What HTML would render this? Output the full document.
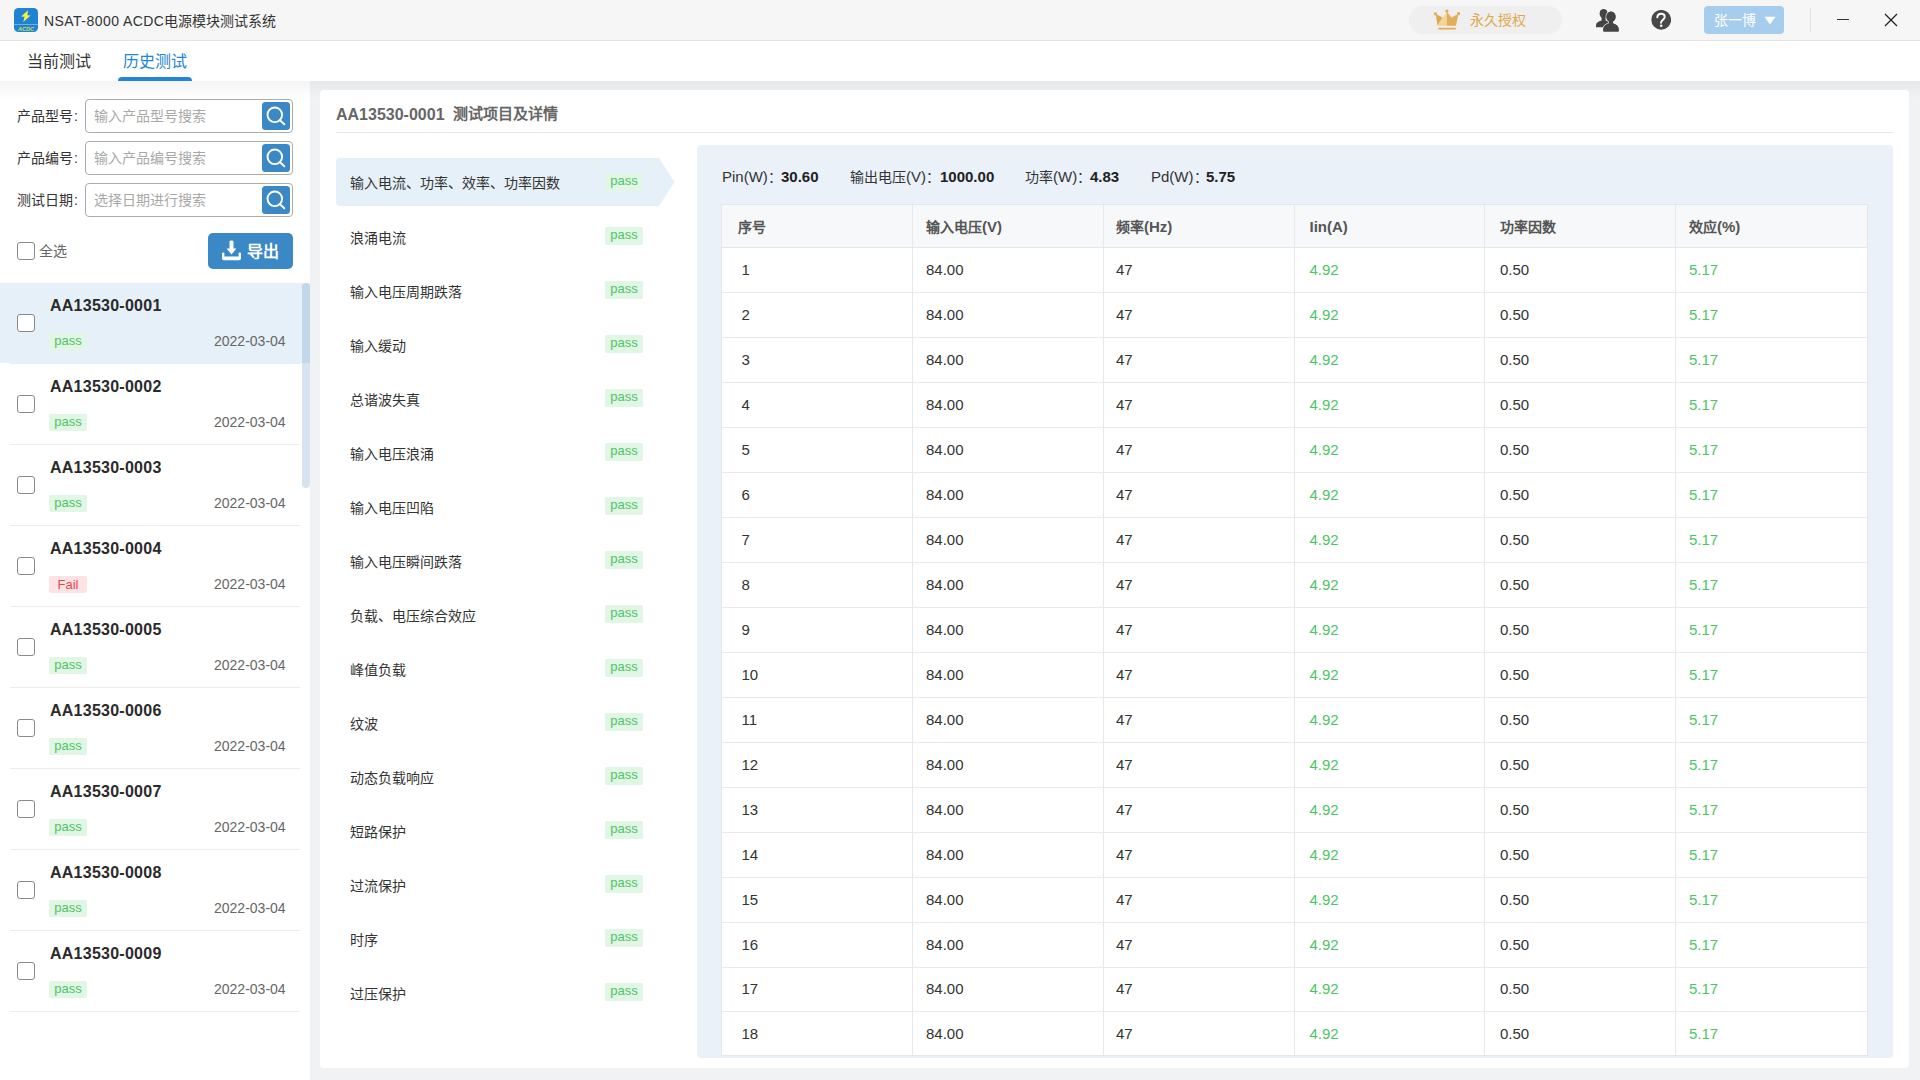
<!DOCTYPE html>
<html lang="zh-CN"><head><meta charset="utf-8"><style>*{box-sizing:border-box;margin:0;padding:0}
html,body{width:1920px;height:1080px;overflow:hidden;background:#f1f2f4;font-family:"Liberation Sans",sans-serif;color:#333}
.a{position:absolute}
.t{position:absolute;white-space:nowrap;line-height:1}
</style></head><body>
<div class="a" style="left:0;top:0;width:1920px;height:40px;background:#f6f6f6"></div>
<div class="a" style="left:0;top:40px;width:1920px;height:1px;background:#e2e2e2"></div>
<svg class="a" style="left:14px;top:8px" width="24" height="24" viewBox="0 0 24 24">
<rect x="0" y="0" width="24" height="24" rx="4.5" fill="#1f82d3"/>
<rect x="0" y="16" width="24" height="1" fill="#6db0e4"/>
<path d="M14 2.2 L7.2 8.6 L10.6 8.8 L9.2 13.9 L16.7 7.5 L13.3 7.2 Z" fill="#f8f43a"/>
<text x="12" y="22.6" font-size="5.6" font-family="Liberation Sans" font-weight="bold" fill="#c9e04a" text-anchor="middle" font-style="italic">ACDC</text>
</svg>
<div class="t" style="left:44px;top:14px;font-size:14px;color:#333"><span style="letter-spacing:0.45px">NSAT-8000 ACDC</span>电源模块测试系统</div>
<div class="a" style="left:1409px;top:6px;width:153px;height:28px;background:#efefef;border-radius:14px"></div>
<svg class="a" style="left:1433px;top:9px" width="28" height="22" viewBox="0 0 28 22">
<path d="M2.6 5 L9.6 8.6 L4.6 16.8 Z" fill="#e0a94f"/>
<path d="M14 3 L4.4 16.8 L14 16.8 Z" fill="#f2d598"/>
<path d="M13.9 3 L18.6 8.6 L25.4 5 L23 16.8 L13.9 16.8 Z" fill="#e3ae5c"/>
<circle cx="2.4" cy="4.8" r="1.6" fill="#e3ab55"/><circle cx="13.9" cy="2.1" r="1.6" fill="#e3ab55"/><circle cx="25.6" cy="4.7" r="1.6" fill="#e3ab55"/>
<rect x="5" y="18.7" width="18" height="1.7" rx="0.8" fill="#e3ab55"/>
</svg>
<div class="t" style="left:1470px;top:13px;font-size:14px;color:#e2a74a">永久授权</div>
<svg class="a" style="left:1594px;top:8px" width="26" height="24" viewBox="0 0 26 24">
<g fill="#444">
<ellipse cx="9.6" cy="5.6" rx="4" ry="4.7"/>
<rect x="7.6" y="9" width="4" height="4"/>
<path d="M2 19.2 L2 17.2 C2 15 4.5 13.6 7.5 12.6 L11.8 12.6 C13 13 14 13.6 14.6 14.2 L14.6 19.2 Z"/>
</g>
<g fill="#444" stroke="#f6f6f6" stroke-width="1.6" paint-order="stroke">
<ellipse cx="17" cy="8.8" rx="4.6" ry="5.3"/>
<path d="M9.4 23.4 L9.4 20.8 C9.4 17.8 12.4 16.2 15 15.4 L19 15.4 C21.6 16.2 24.6 17.8 24.6 20.8 L24.6 23.4 Z"/>
</g>
<g fill="#444"><ellipse cx="17" cy="8.8" rx="4.6" ry="5.3"/><rect x="15" y="12" width="4" height="4.4"/>
<path d="M9.4 23.4 L9.4 20.8 C9.4 17.8 12.4 16.2 15 15.4 L19 15.4 C21.6 16.2 24.6 17.8 24.6 20.8 L24.6 23.4 Z"/></g>
</svg>
<svg class="a" style="left:1651px;top:10px" width="20" height="20" viewBox="0 0 20 20">
<circle cx="10.2" cy="9.8" r="9.9" fill="#484848"/>
<path d="M6.3 7.3 C6.5 5 8.2 3.8 10.2 3.8 C12.4 3.8 13.7 5.2 13.7 7 C13.7 9.3 10.1 10.3 10 12.8" stroke="#fff" stroke-width="1.9" fill="none" stroke-linecap="round"/>
<circle cx="10.2" cy="15.7" r="1.3" fill="#fff"/>
</svg>
<div class="a" style="left:1704px;top:6px;width:80px;height:28px;background:#a7cdee;border-radius:4px"></div>
<div class="t" style="left:1714px;top:13px;font-size:14px;color:#fff">张一博</div>
<svg class="a" style="left:1764px;top:16px" width="12" height="9" viewBox="0 0 12 9"><path d="M0.5 0.8 L11.5 0.8 L6 8.5 Z" fill="#fff"/></svg>
<div class="a" style="left:1810px;top:8px;width:1px;height:24px;background:#e4e4e4"></div>
<div class="a" style="left:1837px;top:18.5px;width:12px;height:1.4px;background:#333"></div>
<svg class="a" style="left:1884px;top:13px" width="14" height="14" viewBox="0 0 14 14"><path d="M1 1 L13 13 M13 1 L1 13" stroke="#222" stroke-width="1.3"/></svg>
<div class="a" style="left:0;top:41px;width:1920px;height:40px;background:#fff"></div>
<div class="t" style="left:27px;top:54px;font-size:16px;color:#333">当前测试</div>
<div class="t" style="left:123px;top:54px;font-size:16px;color:#2386d3">历史测试</div>
<div class="a" style="left:118px;top:77px;width:74px;height:4px;background:#2386d3;border-radius:4px 4px 0 0"></div>
<div class="a" style="left:0;top:81px;width:310px;height:999px;background:#fff"></div>
<div class="t" style="left:17px;top:109px;font-size:14px;color:#333">产品型号<span style="margin-left:1px">:</span></div>
<div class="a" style="left:85px;top:99px;width:208px;height:34px;border:1px solid #acacac;border-radius:4px;background:#fff"></div>
<div class="t" style="left:94px;top:109px;font-size:14px;color:#a8a8a8">输入产品型号搜索</div>
<svg class="a" style="left:262px;top:102px" width="28" height="28" viewBox="0 0 28 28"><rect width="28" height="28" rx="3.5" fill="#3a88c5"/><circle cx="12.8" cy="12.8" r="7.3" stroke="#fff" stroke-width="1.9" fill="none"/><path d="M17.9 18.1 L22.3 22.3" stroke="#fff" stroke-width="2" stroke-linecap="round"/></svg>
<div class="t" style="left:17px;top:151px;font-size:14px;color:#333">产品编号<span style="margin-left:1px">:</span></div>
<div class="a" style="left:85px;top:141px;width:208px;height:34px;border:1px solid #acacac;border-radius:4px;background:#fff"></div>
<div class="t" style="left:94px;top:151px;font-size:14px;color:#a8a8a8">输入产品编号搜索</div>
<svg class="a" style="left:262px;top:144px" width="28" height="28" viewBox="0 0 28 28"><rect width="28" height="28" rx="3.5" fill="#3a88c5"/><circle cx="12.8" cy="12.8" r="7.3" stroke="#fff" stroke-width="1.9" fill="none"/><path d="M17.9 18.1 L22.3 22.3" stroke="#fff" stroke-width="2" stroke-linecap="round"/></svg>
<div class="t" style="left:17px;top:193px;font-size:14px;color:#333">测试日期<span style="margin-left:1px">:</span></div>
<div class="a" style="left:85px;top:183px;width:208px;height:34px;border:1px solid #acacac;border-radius:4px;background:#fff"></div>
<div class="t" style="left:94px;top:193px;font-size:14px;color:#a8a8a8">选择日期进行搜索</div>
<svg class="a" style="left:262px;top:186px" width="28" height="28" viewBox="0 0 28 28"><rect width="28" height="28" rx="3.5" fill="#3a88c5"/><circle cx="12.8" cy="12.8" r="7.3" stroke="#fff" stroke-width="1.9" fill="none"/><path d="M17.9 18.1 L22.3 22.3" stroke="#fff" stroke-width="2" stroke-linecap="round"/></svg>
<div class="a" style="left:17px;top:242px;width:18px;height:18px;border:1.5px solid #8a8a8a;border-radius:3px;background:#fff"></div>
<div class="t" style="left:39px;top:244px;font-size:14px;color:#666">全选</div>
<div class="a" style="left:208px;top:233px;width:85px;height:36px;background:#3a88c5;border-radius:5px"></div>
<svg class="a" style="left:221px;top:240px" width="21" height="21" viewBox="0 0 21 21">
<path d="M8.5 1.6 Q8.5 0.6 10.5 0.6 Q12.5 0.6 12.5 1.6 L12.5 8.6 L15.4 8.6 L10.5 14.5 L5.6 8.6 L8.5 8.6 Z" fill="#fff"/>
<path d="M1 13.5 L1 18.4 Q1 20.2 2.8 20.2 L18.2 20.2 Q20 20.2 20 18.4 L20 13.5 Q20 12.5 18.8 12.5 Q17.6 12.5 17.6 13.5 L17.6 16.6 L3.4 16.6 L3.4 13.5 Q3.4 12.5 2.2 12.5 Q1 12.5 1 13.5 Z" fill="#fff"/>
</svg>
<div class="t" style="left:247px;top:244px;font-size:16px;font-weight:bold;color:#fff">导出</div>
<div class="a" style="left:0;top:283px;width:310px;height:80px;background:#e6f0f8"></div>
<div class="a" style="left:10px;top:363px;width:290px;height:1px;background:#ececec"></div>
<div class="a" style="left:17px;top:314px;width:18px;height:18px;border:1.5px solid #8a8a8a;border-radius:3px;background:#fff"></div>
<div class="t" style="left:50px;top:298px;font-size:16px;font-weight:bold;color:#2a2a2a;letter-spacing:0.25px">AA13530-0001</div>
<div class="t" style="left:49px;top:333px;width:38px;height:17px;background:#e2f6e5;color:#4cc565;font-size:13px;line-height:15.5px;text-align:center;border-radius:2px">pass</div>
<div class="t" style="left:214px;top:334px;font-size:14px;color:#666">2022-03-04</div>
<div class="a" style="left:10px;top:444px;width:290px;height:1px;background:#ececec"></div>
<div class="a" style="left:17px;top:395px;width:18px;height:18px;border:1.5px solid #8a8a8a;border-radius:3px;background:#fff"></div>
<div class="t" style="left:50px;top:379px;font-size:16px;font-weight:bold;color:#2a2a2a;letter-spacing:0.25px">AA13530-0002</div>
<div class="t" style="left:49px;top:414px;width:38px;height:17px;background:#e2f6e5;color:#4cc565;font-size:13px;line-height:15.5px;text-align:center;border-radius:2px">pass</div>
<div class="t" style="left:214px;top:415px;font-size:14px;color:#666">2022-03-04</div>
<div class="a" style="left:10px;top:525px;width:290px;height:1px;background:#ececec"></div>
<div class="a" style="left:17px;top:476px;width:18px;height:18px;border:1.5px solid #8a8a8a;border-radius:3px;background:#fff"></div>
<div class="t" style="left:50px;top:460px;font-size:16px;font-weight:bold;color:#2a2a2a;letter-spacing:0.25px">AA13530-0003</div>
<div class="t" style="left:49px;top:495px;width:38px;height:17px;background:#e2f6e5;color:#4cc565;font-size:13px;line-height:15.5px;text-align:center;border-radius:2px">pass</div>
<div class="t" style="left:214px;top:496px;font-size:14px;color:#666">2022-03-04</div>
<div class="a" style="left:10px;top:606px;width:290px;height:1px;background:#ececec"></div>
<div class="a" style="left:17px;top:557px;width:18px;height:18px;border:1.5px solid #8a8a8a;border-radius:3px;background:#fff"></div>
<div class="t" style="left:50px;top:541px;font-size:16px;font-weight:bold;color:#2a2a2a;letter-spacing:0.25px">AA13530-0004</div>
<div class="t" style="left:49px;top:576px;width:38px;height:17px;background:#fde3e3;color:#e5474d;font-size:13px;line-height:17px;text-align:center;border-radius:2px">Fail</div>
<div class="t" style="left:214px;top:577px;font-size:14px;color:#666">2022-03-04</div>
<div class="a" style="left:10px;top:687px;width:290px;height:1px;background:#ececec"></div>
<div class="a" style="left:17px;top:638px;width:18px;height:18px;border:1.5px solid #8a8a8a;border-radius:3px;background:#fff"></div>
<div class="t" style="left:50px;top:622px;font-size:16px;font-weight:bold;color:#2a2a2a;letter-spacing:0.25px">AA13530-0005</div>
<div class="t" style="left:49px;top:657px;width:38px;height:17px;background:#e2f6e5;color:#4cc565;font-size:13px;line-height:15.5px;text-align:center;border-radius:2px">pass</div>
<div class="t" style="left:214px;top:658px;font-size:14px;color:#666">2022-03-04</div>
<div class="a" style="left:10px;top:768px;width:290px;height:1px;background:#ececec"></div>
<div class="a" style="left:17px;top:719px;width:18px;height:18px;border:1.5px solid #8a8a8a;border-radius:3px;background:#fff"></div>
<div class="t" style="left:50px;top:703px;font-size:16px;font-weight:bold;color:#2a2a2a;letter-spacing:0.25px">AA13530-0006</div>
<div class="t" style="left:49px;top:738px;width:38px;height:17px;background:#e2f6e5;color:#4cc565;font-size:13px;line-height:15.5px;text-align:center;border-radius:2px">pass</div>
<div class="t" style="left:214px;top:739px;font-size:14px;color:#666">2022-03-04</div>
<div class="a" style="left:10px;top:849px;width:290px;height:1px;background:#ececec"></div>
<div class="a" style="left:17px;top:800px;width:18px;height:18px;border:1.5px solid #8a8a8a;border-radius:3px;background:#fff"></div>
<div class="t" style="left:50px;top:784px;font-size:16px;font-weight:bold;color:#2a2a2a;letter-spacing:0.25px">AA13530-0007</div>
<div class="t" style="left:49px;top:819px;width:38px;height:17px;background:#e2f6e5;color:#4cc565;font-size:13px;line-height:15.5px;text-align:center;border-radius:2px">pass</div>
<div class="t" style="left:214px;top:820px;font-size:14px;color:#666">2022-03-04</div>
<div class="a" style="left:10px;top:930px;width:290px;height:1px;background:#ececec"></div>
<div class="a" style="left:17px;top:881px;width:18px;height:18px;border:1.5px solid #8a8a8a;border-radius:3px;background:#fff"></div>
<div class="t" style="left:50px;top:865px;font-size:16px;font-weight:bold;color:#2a2a2a;letter-spacing:0.25px">AA13530-0008</div>
<div class="t" style="left:49px;top:900px;width:38px;height:17px;background:#e2f6e5;color:#4cc565;font-size:13px;line-height:15.5px;text-align:center;border-radius:2px">pass</div>
<div class="t" style="left:214px;top:901px;font-size:14px;color:#666">2022-03-04</div>
<div class="a" style="left:10px;top:1011px;width:290px;height:1px;background:#ececec"></div>
<div class="a" style="left:17px;top:962px;width:18px;height:18px;border:1.5px solid #8a8a8a;border-radius:3px;background:#fff"></div>
<div class="t" style="left:50px;top:946px;font-size:16px;font-weight:bold;color:#2a2a2a;letter-spacing:0.25px">AA13530-0009</div>
<div class="t" style="left:49px;top:981px;width:38px;height:17px;background:#e2f6e5;color:#4cc565;font-size:13px;line-height:15.5px;text-align:center;border-radius:2px">pass</div>
<div class="t" style="left:214px;top:982px;font-size:14px;color:#666">2022-03-04</div>
<div class="a" style="left:302px;top:283px;width:8px;height:205px;background:rgba(30,105,175,0.18);border-radius:4px"></div>
<div class="a" style="left:0;top:81px;width:1920px;height:18px;background:linear-gradient(rgba(0,0,0,0.045),rgba(0,0,0,0))"></div>
<div class="a" style="left:320px;top:90px;width:1589px;height:978px;background:#fff;border-radius:4px"></div>
<div class="t" style="left:336px;top:106.5px;font-size:16px;font-weight:bold;color:#666">AA13530-0001 <span style="font-size:15px;margin-left:4px;position:relative;top:-1px">测试项目及详情</span></div>
<div class="a" style="left:336px;top:132px;width:1557px;height:1px;background:#e6e6e6"></div>
<svg class="a" style="left:336px;top:158px" width="339" height="48" viewBox="0 0 339 48"><path d="M4 0 L323 0 L338.5 24 L323 48 L4 48 Q0 48 0 44 L0 4 Q0 0 4 0 Z" fill="#e6f0f8"/></svg>
<div class="t" style="left:350px;top:176px;font-size:14px;color:#333">输入电流、功率、效率、功率因数</div>
<div class="t" style="left:605px;top:173px;width:38px;height:18px;background:#e2f6e5;color:#4cc565;font-size:13px;line-height:15.5px;text-align:center;border-radius:2px">pass</div>
<div class="t" style="left:350px;top:231px;font-size:14px;color:#333">浪涌电流</div>
<div class="t" style="left:605px;top:227px;width:38px;height:18px;background:#e2f6e5;color:#4cc565;font-size:13px;line-height:15.5px;text-align:center;border-radius:2px">pass</div>
<div class="t" style="left:350px;top:285px;font-size:14px;color:#333">输入电压周期跌落</div>
<div class="t" style="left:605px;top:281px;width:38px;height:18px;background:#e2f6e5;color:#4cc565;font-size:13px;line-height:15.5px;text-align:center;border-radius:2px">pass</div>
<div class="t" style="left:350px;top:339px;font-size:14px;color:#333">输入缓动</div>
<div class="t" style="left:605px;top:335px;width:38px;height:18px;background:#e2f6e5;color:#4cc565;font-size:13px;line-height:15.5px;text-align:center;border-radius:2px">pass</div>
<div class="t" style="left:350px;top:393px;font-size:14px;color:#333">总谐波失真</div>
<div class="t" style="left:605px;top:389px;width:38px;height:18px;background:#e2f6e5;color:#4cc565;font-size:13px;line-height:15.5px;text-align:center;border-radius:2px">pass</div>
<div class="t" style="left:350px;top:447px;font-size:14px;color:#333">输入电压浪涌</div>
<div class="t" style="left:605px;top:443px;width:38px;height:18px;background:#e2f6e5;color:#4cc565;font-size:13px;line-height:15.5px;text-align:center;border-radius:2px">pass</div>
<div class="t" style="left:350px;top:501px;font-size:14px;color:#333">输入电压凹陷</div>
<div class="t" style="left:605px;top:497px;width:38px;height:18px;background:#e2f6e5;color:#4cc565;font-size:13px;line-height:15.5px;text-align:center;border-radius:2px">pass</div>
<div class="t" style="left:350px;top:555px;font-size:14px;color:#333">输入电压瞬间跌落</div>
<div class="t" style="left:605px;top:551px;width:38px;height:18px;background:#e2f6e5;color:#4cc565;font-size:13px;line-height:15.5px;text-align:center;border-radius:2px">pass</div>
<div class="t" style="left:350px;top:609px;font-size:14px;color:#333">负载、电压综合效应</div>
<div class="t" style="left:605px;top:605px;width:38px;height:18px;background:#e2f6e5;color:#4cc565;font-size:13px;line-height:15.5px;text-align:center;border-radius:2px">pass</div>
<div class="t" style="left:350px;top:663px;font-size:14px;color:#333">峰值负载</div>
<div class="t" style="left:605px;top:659px;width:38px;height:18px;background:#e2f6e5;color:#4cc565;font-size:13px;line-height:15.5px;text-align:center;border-radius:2px">pass</div>
<div class="t" style="left:350px;top:717px;font-size:14px;color:#333">纹波</div>
<div class="t" style="left:605px;top:713px;width:38px;height:18px;background:#e2f6e5;color:#4cc565;font-size:13px;line-height:15.5px;text-align:center;border-radius:2px">pass</div>
<div class="t" style="left:350px;top:771px;font-size:14px;color:#333">动态负载响应</div>
<div class="t" style="left:605px;top:767px;width:38px;height:18px;background:#e2f6e5;color:#4cc565;font-size:13px;line-height:15.5px;text-align:center;border-radius:2px">pass</div>
<div class="t" style="left:350px;top:825px;font-size:14px;color:#333">短路保护</div>
<div class="t" style="left:605px;top:821px;width:38px;height:18px;background:#e2f6e5;color:#4cc565;font-size:13px;line-height:15.5px;text-align:center;border-radius:2px">pass</div>
<div class="t" style="left:350px;top:879px;font-size:14px;color:#333">过流保护</div>
<div class="t" style="left:605px;top:875px;width:38px;height:18px;background:#e2f6e5;color:#4cc565;font-size:13px;line-height:15.5px;text-align:center;border-radius:2px">pass</div>
<div class="t" style="left:350px;top:933px;font-size:14px;color:#333">时序</div>
<div class="t" style="left:605px;top:929px;width:38px;height:18px;background:#e2f6e5;color:#4cc565;font-size:13px;line-height:15.5px;text-align:center;border-radius:2px">pass</div>
<div class="t" style="left:350px;top:987px;font-size:14px;color:#333">过压保护</div>
<div class="t" style="left:605px;top:983px;width:38px;height:18px;background:#e2f6e5;color:#4cc565;font-size:13px;line-height:15.5px;text-align:center;border-radius:2px">pass</div>
<div class="a" style="left:697px;top:145px;width:1196px;height:913px;background:#eaf1f9;border-radius:4px"></div>
<div class="t" style="left:722px;top:169px;font-size:15px;color:#333">Pin(W)<span style="font-size:14px">：</span></div>
<div class="t" style="left:781px;top:169px;font-size:15px;font-weight:bold;color:#222">30.60</div>
<div class="t" style="left:850px;top:169px;font-size:15px;color:#333"><span style="font-size:14px">输出电压</span>(V)<span style="font-size:14px">：</span></div>
<div class="t" style="left:940px;top:169px;font-size:15px;font-weight:bold;color:#222">1000.00</div>
<div class="t" style="left:1025px;top:169px;font-size:15px;color:#333"><span style="font-size:14px">功率</span>(W)<span style="font-size:14px">：</span></div>
<div class="t" style="left:1090px;top:169px;font-size:15px;font-weight:bold;color:#222">4.83</div>
<div class="t" style="left:1151px;top:169px;font-size:15px;color:#333">Pd(W)<span style="font-size:14px">：</span></div>
<div class="t" style="left:1206px;top:169px;font-size:15px;font-weight:bold;color:#222">5.75</div>
<div class="a" style="left:721px;top:204px;width:1147px;height:852px;background:#fff;border:1px solid #e3e6ea"></div>
<div class="a" style="left:722px;top:205px;width:1145px;height:42px;background:#f7f8fa"></div>
<div class="a" style="left:912px;top:205px;width:1px;height:850px;background:#e6e8eb"></div>
<div class="a" style="left:1103px;top:205px;width:1px;height:850px;background:#e6e8eb"></div>
<div class="a" style="left:1294px;top:205px;width:1px;height:850px;background:#e6e8eb"></div>
<div class="a" style="left:1484px;top:205px;width:1px;height:850px;background:#e6e8eb"></div>
<div class="a" style="left:1675px;top:205px;width:1px;height:850px;background:#e6e8eb"></div>
<div class="t" style="left:738px;top:218.5px;font-size:15px;font-weight:bold;color:#555"><span style="font-size:14px">序号</span></div>
<div class="t" style="left:926px;top:218.5px;font-size:15px;font-weight:bold;color:#555"><span style="font-size:14px">输入电压</span>(V)</div>
<div class="t" style="left:1116px;top:218.5px;font-size:15px;font-weight:bold;color:#555"><span style="font-size:14px">频率</span>(Hz)</div>
<div class="t" style="left:1309.5px;top:218.5px;font-size:15px;font-weight:bold;color:#555">Iin(A)</div>
<div class="t" style="left:1500px;top:218.5px;font-size:15px;font-weight:bold;color:#555"><span style="font-size:14px">功率因数</span></div>
<div class="t" style="left:1689px;top:218.5px;font-size:15px;font-weight:bold;color:#555"><span style="font-size:14px">效应</span>(%)</div>
<div class="a" style="left:722px;top:247px;width:1145px;height:1px;background:#e3e6ea"></div>
<div class="a" style="left:722px;top:292px;width:1145px;height:1px;background:#e8eaed"></div>
<div class="t" style="left:741.5px;top:261.5px;font-size:15px;color:#333">1</div>
<div class="t" style="left:926px;top:261.5px;font-size:15px;color:#333">84.00</div>
<div class="t" style="left:1116px;top:261.5px;font-size:15px;color:#333">47</div>
<div class="t" style="left:1309.5px;top:261.5px;font-size:15px;color:#4cc565">4.92</div>
<div class="t" style="left:1500px;top:261.5px;font-size:15px;color:#333">0.50</div>
<div class="t" style="left:1689px;top:261.5px;font-size:15px;color:#4cc565">5.17</div>
<div class="a" style="left:722px;top:337px;width:1145px;height:1px;background:#e8eaed"></div>
<div class="t" style="left:741.5px;top:306.5px;font-size:15px;color:#333">2</div>
<div class="t" style="left:926px;top:306.5px;font-size:15px;color:#333">84.00</div>
<div class="t" style="left:1116px;top:306.5px;font-size:15px;color:#333">47</div>
<div class="t" style="left:1309.5px;top:306.5px;font-size:15px;color:#4cc565">4.92</div>
<div class="t" style="left:1500px;top:306.5px;font-size:15px;color:#333">0.50</div>
<div class="t" style="left:1689px;top:306.5px;font-size:15px;color:#4cc565">5.17</div>
<div class="a" style="left:722px;top:382px;width:1145px;height:1px;background:#e8eaed"></div>
<div class="t" style="left:741.5px;top:351.5px;font-size:15px;color:#333">3</div>
<div class="t" style="left:926px;top:351.5px;font-size:15px;color:#333">84.00</div>
<div class="t" style="left:1116px;top:351.5px;font-size:15px;color:#333">47</div>
<div class="t" style="left:1309.5px;top:351.5px;font-size:15px;color:#4cc565">4.92</div>
<div class="t" style="left:1500px;top:351.5px;font-size:15px;color:#333">0.50</div>
<div class="t" style="left:1689px;top:351.5px;font-size:15px;color:#4cc565">5.17</div>
<div class="a" style="left:722px;top:427px;width:1145px;height:1px;background:#e8eaed"></div>
<div class="t" style="left:741.5px;top:396.5px;font-size:15px;color:#333">4</div>
<div class="t" style="left:926px;top:396.5px;font-size:15px;color:#333">84.00</div>
<div class="t" style="left:1116px;top:396.5px;font-size:15px;color:#333">47</div>
<div class="t" style="left:1309.5px;top:396.5px;font-size:15px;color:#4cc565">4.92</div>
<div class="t" style="left:1500px;top:396.5px;font-size:15px;color:#333">0.50</div>
<div class="t" style="left:1689px;top:396.5px;font-size:15px;color:#4cc565">5.17</div>
<div class="a" style="left:722px;top:472px;width:1145px;height:1px;background:#e8eaed"></div>
<div class="t" style="left:741.5px;top:441.5px;font-size:15px;color:#333">5</div>
<div class="t" style="left:926px;top:441.5px;font-size:15px;color:#333">84.00</div>
<div class="t" style="left:1116px;top:441.5px;font-size:15px;color:#333">47</div>
<div class="t" style="left:1309.5px;top:441.5px;font-size:15px;color:#4cc565">4.92</div>
<div class="t" style="left:1500px;top:441.5px;font-size:15px;color:#333">0.50</div>
<div class="t" style="left:1689px;top:441.5px;font-size:15px;color:#4cc565">5.17</div>
<div class="a" style="left:722px;top:517px;width:1145px;height:1px;background:#e8eaed"></div>
<div class="t" style="left:741.5px;top:486.5px;font-size:15px;color:#333">6</div>
<div class="t" style="left:926px;top:486.5px;font-size:15px;color:#333">84.00</div>
<div class="t" style="left:1116px;top:486.5px;font-size:15px;color:#333">47</div>
<div class="t" style="left:1309.5px;top:486.5px;font-size:15px;color:#4cc565">4.92</div>
<div class="t" style="left:1500px;top:486.5px;font-size:15px;color:#333">0.50</div>
<div class="t" style="left:1689px;top:486.5px;font-size:15px;color:#4cc565">5.17</div>
<div class="a" style="left:722px;top:562px;width:1145px;height:1px;background:#e8eaed"></div>
<div class="t" style="left:741.5px;top:531.5px;font-size:15px;color:#333">7</div>
<div class="t" style="left:926px;top:531.5px;font-size:15px;color:#333">84.00</div>
<div class="t" style="left:1116px;top:531.5px;font-size:15px;color:#333">47</div>
<div class="t" style="left:1309.5px;top:531.5px;font-size:15px;color:#4cc565">4.92</div>
<div class="t" style="left:1500px;top:531.5px;font-size:15px;color:#333">0.50</div>
<div class="t" style="left:1689px;top:531.5px;font-size:15px;color:#4cc565">5.17</div>
<div class="a" style="left:722px;top:607px;width:1145px;height:1px;background:#e8eaed"></div>
<div class="t" style="left:741.5px;top:576.5px;font-size:15px;color:#333">8</div>
<div class="t" style="left:926px;top:576.5px;font-size:15px;color:#333">84.00</div>
<div class="t" style="left:1116px;top:576.5px;font-size:15px;color:#333">47</div>
<div class="t" style="left:1309.5px;top:576.5px;font-size:15px;color:#4cc565">4.92</div>
<div class="t" style="left:1500px;top:576.5px;font-size:15px;color:#333">0.50</div>
<div class="t" style="left:1689px;top:576.5px;font-size:15px;color:#4cc565">5.17</div>
<div class="a" style="left:722px;top:652px;width:1145px;height:1px;background:#e8eaed"></div>
<div class="t" style="left:741.5px;top:621.5px;font-size:15px;color:#333">9</div>
<div class="t" style="left:926px;top:621.5px;font-size:15px;color:#333">84.00</div>
<div class="t" style="left:1116px;top:621.5px;font-size:15px;color:#333">47</div>
<div class="t" style="left:1309.5px;top:621.5px;font-size:15px;color:#4cc565">4.92</div>
<div class="t" style="left:1500px;top:621.5px;font-size:15px;color:#333">0.50</div>
<div class="t" style="left:1689px;top:621.5px;font-size:15px;color:#4cc565">5.17</div>
<div class="a" style="left:722px;top:697px;width:1145px;height:1px;background:#e8eaed"></div>
<div class="t" style="left:741.5px;top:666.5px;font-size:15px;color:#333">10</div>
<div class="t" style="left:926px;top:666.5px;font-size:15px;color:#333">84.00</div>
<div class="t" style="left:1116px;top:666.5px;font-size:15px;color:#333">47</div>
<div class="t" style="left:1309.5px;top:666.5px;font-size:15px;color:#4cc565">4.92</div>
<div class="t" style="left:1500px;top:666.5px;font-size:15px;color:#333">0.50</div>
<div class="t" style="left:1689px;top:666.5px;font-size:15px;color:#4cc565">5.17</div>
<div class="a" style="left:722px;top:742px;width:1145px;height:1px;background:#e8eaed"></div>
<div class="t" style="left:741.5px;top:711.5px;font-size:15px;color:#333">11</div>
<div class="t" style="left:926px;top:711.5px;font-size:15px;color:#333">84.00</div>
<div class="t" style="left:1116px;top:711.5px;font-size:15px;color:#333">47</div>
<div class="t" style="left:1309.5px;top:711.5px;font-size:15px;color:#4cc565">4.92</div>
<div class="t" style="left:1500px;top:711.5px;font-size:15px;color:#333">0.50</div>
<div class="t" style="left:1689px;top:711.5px;font-size:15px;color:#4cc565">5.17</div>
<div class="a" style="left:722px;top:787px;width:1145px;height:1px;background:#e8eaed"></div>
<div class="t" style="left:741.5px;top:756.5px;font-size:15px;color:#333">12</div>
<div class="t" style="left:926px;top:756.5px;font-size:15px;color:#333">84.00</div>
<div class="t" style="left:1116px;top:756.5px;font-size:15px;color:#333">47</div>
<div class="t" style="left:1309.5px;top:756.5px;font-size:15px;color:#4cc565">4.92</div>
<div class="t" style="left:1500px;top:756.5px;font-size:15px;color:#333">0.50</div>
<div class="t" style="left:1689px;top:756.5px;font-size:15px;color:#4cc565">5.17</div>
<div class="a" style="left:722px;top:832px;width:1145px;height:1px;background:#e8eaed"></div>
<div class="t" style="left:741.5px;top:801.5px;font-size:15px;color:#333">13</div>
<div class="t" style="left:926px;top:801.5px;font-size:15px;color:#333">84.00</div>
<div class="t" style="left:1116px;top:801.5px;font-size:15px;color:#333">47</div>
<div class="t" style="left:1309.5px;top:801.5px;font-size:15px;color:#4cc565">4.92</div>
<div class="t" style="left:1500px;top:801.5px;font-size:15px;color:#333">0.50</div>
<div class="t" style="left:1689px;top:801.5px;font-size:15px;color:#4cc565">5.17</div>
<div class="a" style="left:722px;top:877px;width:1145px;height:1px;background:#e8eaed"></div>
<div class="t" style="left:741.5px;top:846.5px;font-size:15px;color:#333">14</div>
<div class="t" style="left:926px;top:846.5px;font-size:15px;color:#333">84.00</div>
<div class="t" style="left:1116px;top:846.5px;font-size:15px;color:#333">47</div>
<div class="t" style="left:1309.5px;top:846.5px;font-size:15px;color:#4cc565">4.92</div>
<div class="t" style="left:1500px;top:846.5px;font-size:15px;color:#333">0.50</div>
<div class="t" style="left:1689px;top:846.5px;font-size:15px;color:#4cc565">5.17</div>
<div class="a" style="left:722px;top:922px;width:1145px;height:1px;background:#e8eaed"></div>
<div class="t" style="left:741.5px;top:891.5px;font-size:15px;color:#333">15</div>
<div class="t" style="left:926px;top:891.5px;font-size:15px;color:#333">84.00</div>
<div class="t" style="left:1116px;top:891.5px;font-size:15px;color:#333">47</div>
<div class="t" style="left:1309.5px;top:891.5px;font-size:15px;color:#4cc565">4.92</div>
<div class="t" style="left:1500px;top:891.5px;font-size:15px;color:#333">0.50</div>
<div class="t" style="left:1689px;top:891.5px;font-size:15px;color:#4cc565">5.17</div>
<div class="a" style="left:722px;top:967px;width:1145px;height:1px;background:#e8eaed"></div>
<div class="t" style="left:741.5px;top:936.5px;font-size:15px;color:#333">16</div>
<div class="t" style="left:926px;top:936.5px;font-size:15px;color:#333">84.00</div>
<div class="t" style="left:1116px;top:936.5px;font-size:15px;color:#333">47</div>
<div class="t" style="left:1309.5px;top:936.5px;font-size:15px;color:#4cc565">4.92</div>
<div class="t" style="left:1500px;top:936.5px;font-size:15px;color:#333">0.50</div>
<div class="t" style="left:1689px;top:936.5px;font-size:15px;color:#4cc565">5.17</div>
<div class="a" style="left:722px;top:1011px;width:1145px;height:1px;background:#e8eaed"></div>
<div class="t" style="left:741.5px;top:980.5px;font-size:15px;color:#333">17</div>
<div class="t" style="left:926px;top:980.5px;font-size:15px;color:#333">84.00</div>
<div class="t" style="left:1116px;top:980.5px;font-size:15px;color:#333">47</div>
<div class="t" style="left:1309.5px;top:980.5px;font-size:15px;color:#4cc565">4.92</div>
<div class="t" style="left:1500px;top:980.5px;font-size:15px;color:#333">0.50</div>
<div class="t" style="left:1689px;top:980.5px;font-size:15px;color:#4cc565">5.17</div>
<div class="t" style="left:741.5px;top:1025.5px;font-size:15px;color:#333">18</div>
<div class="t" style="left:926px;top:1025.5px;font-size:15px;color:#333">84.00</div>
<div class="t" style="left:1116px;top:1025.5px;font-size:15px;color:#333">47</div>
<div class="t" style="left:1309.5px;top:1025.5px;font-size:15px;color:#4cc565">4.92</div>
<div class="t" style="left:1500px;top:1025.5px;font-size:15px;color:#333">0.50</div>
<div class="t" style="left:1689px;top:1025.5px;font-size:15px;color:#4cc565">5.17</div>
</body></html>
